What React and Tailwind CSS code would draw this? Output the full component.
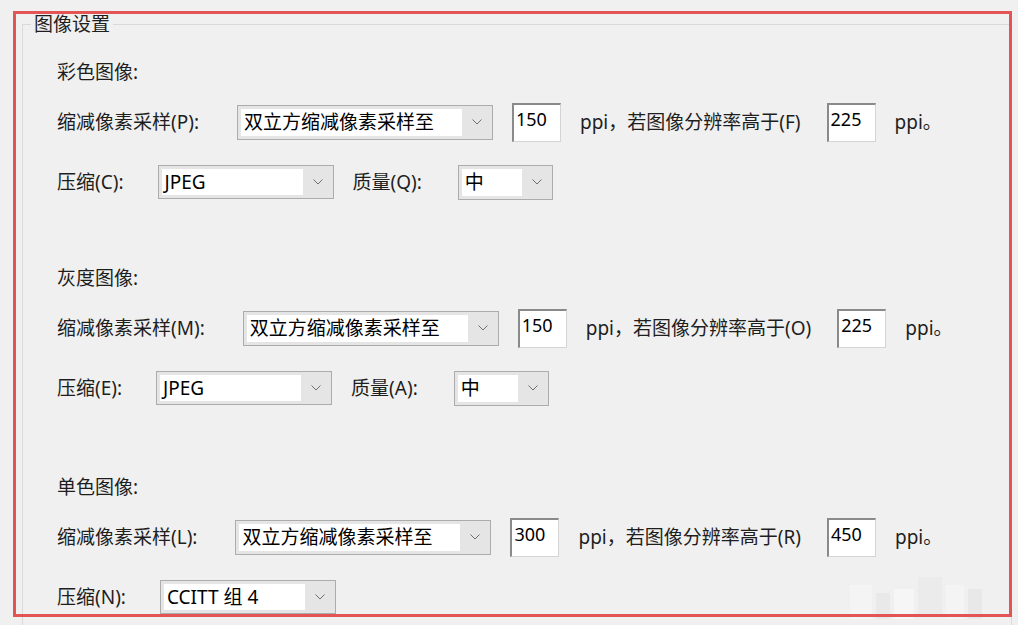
import React from 'react';

const font = { fontFamily: '"Noto Sans", "Noto Sans CJK SC", sans-serif' };

const Chevron = () => (
  <svg width="10" height="6" viewBox="0 0 10 6" className="text-[#707070]">
    <polyline points="0.5,0.5 5,5 9.5,0.5" fill="none" stroke="currentColor" strokeWidth="1" />
  </svg>
);

const Select = ({ value, w, h = 'h-[35px]', ml }) => (
  <div className={`flex items-stretch border border-[#acacac] bg-[#e5e5e5] ${w} ${h} ${ml}`}>
    <div className="flex-1 bg-white my-[3px] ml-[3px] flex items-center pl-[3px] text-[19px] text-black leading-none">
      {value}
    </div>
    <div className="w-[30px] flex items-center justify-center">
      <Chevron />
    </div>
  </div>
);

const Field = ({ value, ml }) => (
  <div className={`w-[49px] h-[39px] bg-white border-t-2 border-l-2 border-t-[#8a8a8a] border-l-[#8a8a8a] border-r border-b border-r-[#d4d4d4] border-b-[#d4d4d4] pl-[2px] pt-[3px] text-[18px] leading-[22px] text-black ${ml}`}>
    {value}
  </div>
);

const Section = ({ title, low, high, letters, comp, quality, mt }) => (
  <div className={mt}>
    <div className="h-[40px] flex items-center">{title}:</div>

    <div className="h-[40px] flex items-center mt-[10px]">
      <span>缩减像素采样({letters[0]}):</span>
      <Select value="双立方缩减像素采样至" w="w-[256px]" ml="ml-[38px]" />
      <Field value={low} ml="ml-[19px]" />
      <span className="ml-[19px]">ppi，若图像分辨率高于({letters[1]})</span>
      <Field value={high} ml="ml-[26px]" />
      <span className="ml-[19px]">ppi。</span>
    </div>

    <div className="h-[40px] flex items-center mt-[20px]">
      <span>压缩({letters[2]}):</span>
      <Select value={comp} w="w-[176px]" h="h-[34px]" ml="ml-[34px]" />
      {quality && (
        <>
          <span className="ml-[19px]">质量({letters[3]}):</span>
          <Select value="中" w="w-[95px]" ml="ml-[36px]" />
        </>
      )}
    </div>
  </div>
);

export default function App() {
  return (
    <div className="relative w-[1018px] h-[625px] overflow-hidden bg-[#f0f0f0] text-[19px] text-[#1e1e1e]" style={font}>
      <div className="pt-[14px] pl-[22px]">
        <fieldset className="w-[990px] h-[660px] border border-[#dadada] pl-[34px]">
          <legend className="-ml-[26px] px-[3px] leading-[20px]">图像设置</legend>
          <div className="pt-[18px]">
            <Section title="彩色图像" low="150" high="225" letters={['P', 'F', 'C', 'Q']} comp="JPEG" quality />
            <Section title="灰度图像" low="150" high="225" letters={['M', 'O', 'E', 'A']} comp="JPEG" quality mt="mt-[56px]" />
            <Section title="单色图像" low="300" high="450" letters={['L', 'R', 'N']} comp="CCITT 组 4" mt="mt-[59px]" />
          </div>
        </fieldset>
      </div>

      {/* watermark mosaic */}
      <div className="absolute left-[850px] top-[585px] flex gap-[4px] opacity-60 pointer-events-none">
        <div className="w-[22px] h-[34px] bg-[#f7f7f7]" />
        <div className="w-[14px] h-[26px] mt-[8px] bg-[#e6e6e6]" />
        <div className="w-[20px] h-[30px] mt-[4px] bg-[#fafafa]" />
        <div className="w-[24px] h-[40px] -mt-[8px] bg-[#e9e9e9]" />
        <div className="w-[18px] h-[34px] bg-[#f8f8f8]" />
        <div className="w-[14px] h-[30px] mt-[4px] bg-[#e4e4e4]" />
      </div>

      {/* red annotation box */}
      <div className="absolute left-[13px] top-[11px] w-[999px] h-[606px] border-[3px] border-[#e35454] pointer-events-none" />
    </div>
  );
}
